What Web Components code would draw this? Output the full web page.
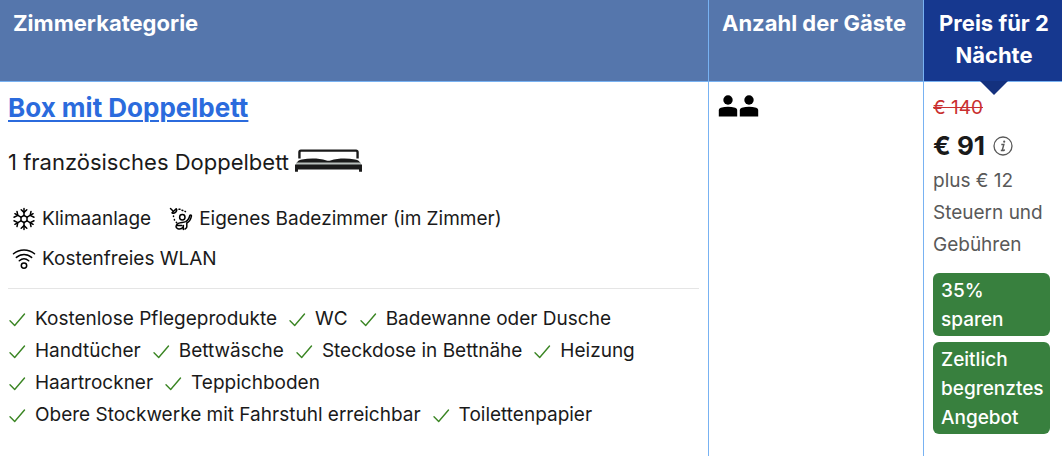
<!DOCTYPE html>
<html lang="de">
<head>
<meta charset="UTF-8">
<meta name="viewport" content="width=device-width, initial-scale=1">
<title>Zimmerkategorie</title>
<style>
  :root {
    --text: #1a1a1a;
    --text-muted: #595959;
    --link: #2b6bdd;
    --header: #5576ac;
    --header-price: #16388f;
    --header-arrow: #14317e;
    --line: #78b2f2;
    --divider: #e5e5e5;
    --green: #38803e;
    --check: #3a8523;
    --red: #c93030;
  }

  body {
    margin: 0;
    background: #ffffff;
    color: var(--text);
    font-family: Inter, 'Liberation Sans', sans-serif;
    font-size: 19px;
    line-height: 32px;
  }
</style>
</head>
<body>
<room-table>
  <room-info slot="room" href="#zimmer">
    Box mit Doppelbett
    <span slot="bed">1 französisches Doppelbett</span>
    <room-facility slot="facilities" icon="snow">Klimaanlage</room-facility>
    <room-facility slot="facilities" icon="shower">Eigenes Badezimmer (im Zimmer)</room-facility>
    <room-facility slot="facilities" icon="wifi">Kostenfreies WLAN</room-facility>
    <check-item slot="amenities">Kostenlose Pflegeprodukte</check-item>
    <check-item slot="amenities">WC</check-item>
    <check-item slot="amenities">Badewanne oder Dusche</check-item>
    <check-item slot="amenities">Handtücher</check-item>
    <check-item slot="amenities">Bettwäsche</check-item>
    <check-item slot="amenities">Steckdose in Bettnähe</check-item>
    <check-item slot="amenities">Heizung</check-item>
    <check-item slot="amenities">Haartrockner</check-item>
    <check-item slot="amenities">Teppichboden</check-item>
    <check-item slot="amenities">Obere Stockwerke mit Fahrstuhl erreichbar</check-item>
    <check-item slot="amenities">Toilettenpapier</check-item>
  </room-info>
  <guest-count slot="guests" count="2"></guest-count>
  <price-box slot="price">
    <span slot="old">€ 140</span>
    <span slot="current">€ 91</span>
    plus € 12 Steuern und Gebühren
    <deal-badge slot="deals">35% sparen</deal-badge>
    <deal-badge slot="deals">Zeitlich begrenztes Angebot</deal-badge>
  </price-box>
</room-table>

<script>
const ICONS = {
  snow: `
    <svg width="24" height="24" viewBox="0 0 24 24" fill="none" stroke="currentColor" stroke-width="1.5" stroke-linecap="round" stroke-linejoin="round">
      <path d="M12 1.5v7M12 15.5v7M2.9 6.7l6 3.5M15.1 13.8l6 3.5M2.9 17.3l6-3.5M15.1 10.2l6-3.5"/>
      <path d="M12 8.5l3 1.7v3.6l-3 1.7-3-1.7v-3.6z"/>
      <path d="M9.2 2.8L12 5.4l2.8-2.6M9.2 21.2l2.8-2.6 2.8 2.6"/>
      <path d="M2 10.2l3.8-1.8-.8-4M22 13.8l-3.8 1.8.8 4M2 13.8l3.8 1.8-.8 4M22 10.2l-3.8-1.8.8-4"/>
    </svg>`,
  shower: `
    <svg width="24" height="24" viewBox="0 0 24 24" fill="none" stroke="currentColor" stroke-width="1.5" stroke-linecap="round" stroke-linejoin="round">
      <path d="M1.5 1.5l2 2M3 5.8l4.2-4c.8 1 .6 2.2-.5 3.3-1.1 1-2.5 1.4-3.7.7z"/>
      <path d="M10 2.3h1M13 3.2l.8.3M16 4.4l.5.3M4.5 9v.6M5.4 12.5l.1.6M7.3 15.3l.4.5"/>
      <circle cx="13.3" cy="10.3" r="2.7"/>
      <path d="M20.9 8.3c.8-.7 1.8 0 1.5 1-.7 3-1.8 5.4-4.6 6.7v4c0 1-1 1.500-1.800 2M20.900 8.300c-.7 2.900-1.800 5.100-4.200 6.300-2.700 1-5.200.6-7.400 1.700-2.800 1.400-3.100 4.700-.5 5.500 2.500.8 4.400-.3 5.500-1.800M8 18.600h4.800"/>
      <path d="M14.3 18.5v4"/>
    </svg>`,
  wifi: `
    <svg width="24" height="24" viewBox="0 0 24 24" fill="none" stroke="currentColor" stroke-width="1.5" stroke-linecap="round">
      <path d="M1.5 6.8c6-5.1 15-5.1 21 0M4.4 10.4c4.5-3.8 10.7-3.8 15.2 0M7.3 13.8c2.8-2.4 6.6-2.4 9.4 0"/>
      <circle cx="12" cy="18.6" r="2.7"/>
    </svg>`,
  check: `
    <svg width="18" height="18" viewBox="0 0 18 18" fill="none" stroke="currentColor" stroke-width="1.4" stroke-linecap="round" stroke-linejoin="round">
      <path d="M2 10.8l4.7 4.7L16.5 4"/>
    </svg>`,
  bed: `
    <svg width="67" height="24" viewBox="0 0 68 24">
      <path d="M4.5 9.5V3A1.5 1.5 0 0 1 6 1.500h56A1.500 1.500 0 0 1 63.500 3v6.500" fill="none" stroke="#1a1a1a" stroke-width="2.4"/>
      <path d="M1.5 14.5c.8-2.3 2.5-3.5 5.5-4 8-1.5 17-1.5 25 1 1.3.4 2.7.4 4 0 8-2.500 17-2.500 25-1 3 .5 4.700 1.700 5.500 4z" fill="#1a1a1a"/>
      <path d="M1 13.5h66V16H1z" fill="#b9bfbc"/>
      <path d="M0 15.5h68V23h-3v-2.500H3V23H0z" fill="#1a1a1a"/>
    </svg>`,
  person: `
    <svg width="20" height="22" viewBox="0 0 20 22" fill="#000000">
      <circle cx="10" cy="5" r="4.7"/>
      <path d="M.8 21.5v-6c0-1.4.7-2.3 2-2.7 4.8-1.3 9.6-1.3 14.4 0 1.3.4 2 1.3 2 2.7v6z"/>
    </svg>`,
  info: `
    <svg width="20" height="20" viewBox="0 0 20 20" fill="none" stroke="currentColor">
      <circle cx="10" cy="10" r="9" stroke-width="1.3"/>
      <path d="M8.3 8.6h2.500L9.200 14.400h1.600l.9-.8M7.800 14.400h1.400" stroke-width="1.5"/>
      <circle cx="11.2" cy="5.7" r="1.1" fill="currentColor" stroke="none"/>
    </svg>`
};

class RoomTable extends HTMLElement {
  constructor() {
    super();
    this.attachShadow({ mode: 'open' });
  }

  connectedCallback() {
    this.shadowRoot.innerHTML = `
      <style>
        :host {
          display: grid;
          min-height: 100vh;
        }

        table {
          width: 100%;
          height: 100%;
          table-layout: fixed;
          border-collapse: separate;
          border-spacing: 0;
        }

        .guests { width: 215px; }
        .price { width: 139px; }

        th, td {
          box-sizing: border-box;
          vertical-align: top;
          text-align: left;
        }

        th {
          height: 82px;
          padding: 7px 13px;
          background: var(--header);
          border-bottom: 1px solid var(--line);
          color: #ffffff;
          font-size: 22px;
          font-weight: 700;
        }

        th + th, td + td {
          border-left: 1px solid var(--line);
        }

        th.price {
          position: relative;
          padding: 7px 6px 7px 8px;
          background: var(--header-price);
          text-align: center;
        }

        /* arrow pointing down at the price */
        th.price::after {
          content: '';
          position: absolute;
          top: 100%;
          left: 50%;
          margin-left: -13px;
          border: 14px solid transparent;
          border-top-color: var(--header-arrow);
          border-bottom: 0;
        }

        td { padding: 10px 9px 16px 8px; }
        td + td { padding: 10px 12px 16px 9px; }
      </style>

      <table>
        <thead>
          <tr>
            <th scope="col">Zimmerkategorie</th>
            <th scope="col" class="guests">Anzahl der Gäste</th>
            <th scope="col" class="price">Preis für 2 Nächte</th>
          </tr>
        </thead>
        <tbody>
          <tr>
            <td><slot name="room"></slot></td>
            <td><slot name="guests"></slot></td>
            <td><slot name="price"></slot></td>
          </tr>
        </tbody>
      </table>
    `;
  }
}

class RoomInfo extends HTMLElement {
  constructor() {
    super();
    this.attachShadow({ mode: 'open' });
  }

  connectedCallback() {
    this.shadowRoot.innerHTML = `
      <style>
        :host { display: block; }

        a {
          display: block;
          width: fit-content;
          color: var(--link);
          font-size: 26px;
          font-weight: 700;
          text-underline-offset: 3px;
          text-decoration-thickness: 2px;
        }

        .bed {
          display: flex;
          align-items: center;
          gap: 6px;
          margin-top: 22px;
          font-size: 22px;
        }

        .bed svg {
          display: block;
          padding-bottom: 2px;
        }

        .facilities {
          display: flex;
          flex-wrap: wrap;
          gap: 8px 18px;
          margin-top: 25px;
          padding: 0 4px 13px;
        }

        .amenities {
          display: flex;
          flex-wrap: wrap;
          column-gap: 11px;
          padding-top: 14px;
          border-top: 1px solid var(--divider);
        }
      </style>

      <a href="${this.getAttribute('href')}"><slot></slot></a>
      <div class="bed"><slot name="bed"></slot>${ICONS.bed}</div>
      <div class="facilities"><slot name="facilities"></slot></div>
      <div class="amenities"><slot name="amenities"></slot></div>
    `;
  }
}

class RoomFacility extends HTMLElement {
  constructor() {
    super();
    this.attachShadow({ mode: 'open' });
  }

  connectedCallback() {
    this.shadowRoot.innerHTML = `
      <style>
        :host {
          display: flex;
          align-items: center;
          gap: 6px;
        }

        svg { flex: none; color: #000000; }
      </style>
      ${ICONS[this.getAttribute('icon')]}
      <span><slot></slot></span>
    `;
  }
}

class CheckItem extends HTMLElement {
  constructor() {
    super();
    this.attachShadow({ mode: 'open' });
  }

  connectedCallback() {
    this.shadowRoot.innerHTML = `
      <style>
        :host {
          display: flex;
          align-items: center;
          gap: 9px;
        }

        svg { flex: none; color: var(--check); }
      </style>
      ${ICONS.check}
      <span><slot></slot></span>
    `;
  }
}

class GuestCount extends HTMLElement {
  constructor() {
    super();
    this.attachShadow({ mode: 'open' });
  }

  connectedCallback() {
    const count = Number(this.getAttribute('count'));
    this.shadowRoot.innerHTML = `
      <style>
        :host {
          display: flex;
          gap: 1px;
          padding-top: 3px;
        }
      </style>
      ${ICONS.person.repeat(count)}
    `;
  }
}

class PriceBox extends HTMLElement {
  constructor() {
    super();
    this.attachShadow({ mode: 'open' });
  }

  connectedCallback() {
    this.shadowRoot.innerHTML = `
      <style>
        :host { display: block; }

        s {
          display: block;
          color: var(--red);
        }

        .current {
          display: flex;
          align-items: center;
          gap: 8px;
          margin-top: 6px;
          font-size: 26px;
          font-weight: 700;
        }

        button {
          display: flex;
          padding: 0;
          border: 0;
          background: none;
          color: var(--text-muted);
          cursor: pointer;
        }

        .taxes {
          margin-top: 3px;
          color: var(--text-muted);
        }

        .deals {
          display: flex;
          flex-direction: column;
          gap: 6px;
          margin-top: 12px;
        }
      </style>

      <s><slot name="old"></slot></s>
      <div class="current">
        <slot name="current"></slot>
        <button type="button" aria-label="Preisinformationen">${ICONS.info}</button>
      </div>
      <div class="taxes"><slot></slot></div>
      <div class="deals"><slot name="deals"></slot></div>
    `;
  }
}

class DealBadge extends HTMLElement {
  constructor() {
    super();
    this.attachShadow({ mode: 'open' });
  }

  connectedCallback() {
    this.shadowRoot.innerHTML = `
      <style>
        :host {
          display: block;
          padding: 3px 6px 2px 8px;
          border-radius: 6px;
          background: var(--green);
          color: #ffffff;
          font-weight: 500;
          line-height: 29px;
        }
      </style>
      <slot></slot>
    `;
  }
}

customElements.define('room-table', RoomTable);
customElements.define('room-info', RoomInfo);
customElements.define('room-facility', RoomFacility);
customElements.define('check-item', CheckItem);
customElements.define('guest-count', GuestCount);
customElements.define('price-box', PriceBox);
customElements.define('deal-badge', DealBadge);
</script>
</body>
</html>
